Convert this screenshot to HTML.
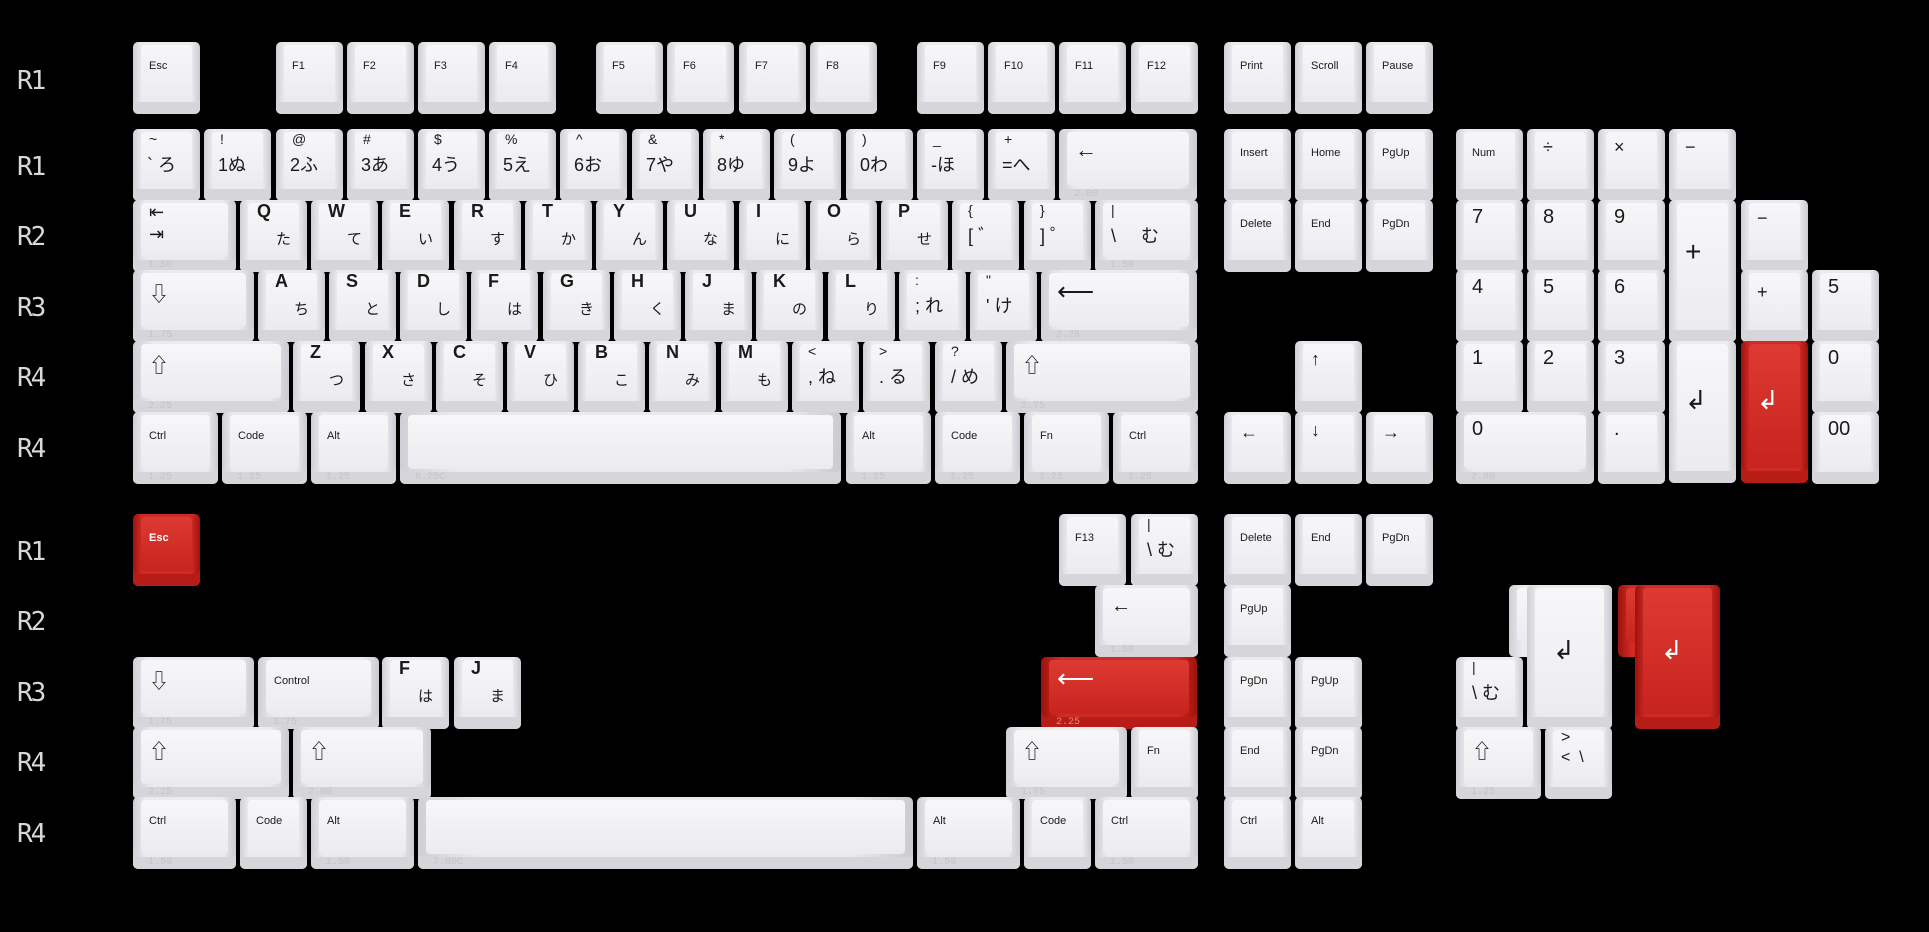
<!DOCTYPE html>
<html><head><meta charset="utf-8"><style>
*{margin:0;padding:0;box-sizing:border-box}
body{width:1929px;height:932px;background:#000;position:relative;overflow:hidden;font-family:"Liberation Sans","Noto Sans CJK JP",sans-serif;color:#1a1a1a}
.L{position:absolute;left:17px;font:26px "DejaVu Sans Mono","Liberation Mono",monospace;color:#d8d8d8;letter-spacing:-2px}
.k{position:absolute;height:72px;width:67px;border-radius:5px;background:linear-gradient(90deg,#cfcfd5 0,#ebebef 13%,#ebebef 87%,#cacad0 100%);box-shadow:inset 0 -12px 0 #d5d5da}
.k::before{content:"";position:absolute;left:8px;right:8px;top:3px;bottom:15px;border-radius:4px;background:linear-gradient(#f7f7f9,#ececf0)}
.k.t{height:142px}
.k.r{background:linear-gradient(90deg,#9e120d 0,#cf2a24 13%,#cf2a24 87%,#9e120d 100%);box-shadow:inset 0 -12px 0 #b81c17;color:#fff}
.k.r::before{background:linear-gradient(#dd3a33,#c8241f)}
.k span{position:absolute;z-index:1;white-space:nowrap}
.m{left:16px;top:18px;font-size:11px}
.a{left:17px;top:1px;font-weight:bold;font-size:18px}
.j{left:36px;top:28px;font-size:15px}
.u{left:16px;top:2px;font-size:14px}
.b{left:14px;top:22px;font-size:18px}
.i{left:16px;top:8px;font-size:22px}
.n{left:16px;top:6px;font-size:20px}
.s{left:15px;bottom:1px;font:10px "Liberation Mono",monospace;color:#c4c4ca}
</style></head><body>
<div class="L" style="top:66px">R1</div>
<div class="L" style="top:152px">R1</div>
<div class="L" style="top:222px">R2</div>
<div class="L" style="top:293px">R3</div>
<div class="L" style="top:363px">R4</div>
<div class="L" style="top:434px">R4</div>
<div class="L" style="top:537px">R1</div>
<div class="L" style="top:607px">R2</div>
<div class="L" style="top:678px">R3</div>
<div class="L" style="top:748px">R4</div>
<div class="L" style="top:819px">R4</div>

<div class="k" style="left:133px;top:42px"><span class="m">Esc</span></div>
<div class="k" style="left:276px;top:42px"><span class="m">F1</span></div>
<div class="k" style="left:347px;top:42px"><span class="m">F2</span></div>
<div class="k" style="left:418px;top:42px"><span class="m">F3</span></div>
<div class="k" style="left:489px;top:42px"><span class="m">F4</span></div>
<div class="k" style="left:596px;top:42px"><span class="m">F5</span></div>
<div class="k" style="left:667px;top:42px"><span class="m">F6</span></div>
<div class="k" style="left:739px;top:42px"><span class="m">F7</span></div>
<div class="k" style="left:810px;top:42px"><span class="m">F8</span></div>
<div class="k" style="left:917px;top:42px"><span class="m">F9</span></div>
<div class="k" style="left:988px;top:42px"><span class="m">F10</span></div>
<div class="k" style="left:1059px;top:42px"><span class="m">F11</span></div>
<div class="k" style="left:1131px;top:42px"><span class="m">F12</span></div>
<div class="k" style="left:1224px;top:42px"><span class="m">Print</span></div>
<div class="k" style="left:1295px;top:42px"><span class="m">Scroll</span></div>
<div class="k" style="left:1366px;top:42px"><span class="m">Pause</span></div>

<div class="k" style="left:133px;top:129px"><span class="u">~</span><span class="b">` ろ</span></div>
<div class="k" style="left:204px;top:129px"><span class="u">!</span><span class="b">1ぬ</span></div>
<div class="k" style="left:276px;top:129px"><span class="u">@</span><span class="b">2ふ</span></div>
<div class="k" style="left:347px;top:129px"><span class="u">#</span><span class="b">3あ</span></div>
<div class="k" style="left:418px;top:129px"><span class="u">$</span><span class="b">4う</span></div>
<div class="k" style="left:489px;top:129px"><span class="u">%</span><span class="b">5え</span></div>
<div class="k" style="left:560px;top:129px"><span class="u">^</span><span class="b">6お</span></div>
<div class="k" style="left:632px;top:129px"><span class="u">&amp;</span><span class="b">7や</span></div>
<div class="k" style="left:703px;top:129px"><span class="u">*</span><span class="b">8ゆ</span></div>
<div class="k" style="left:774px;top:129px"><span class="u">(</span><span class="b">9よ</span></div>
<div class="k" style="left:846px;top:129px"><span class="u">)</span><span class="b">0わ</span></div>
<div class="k" style="left:917px;top:129px"><span class="u">_</span><span class="b">-ほ</span></div>
<div class="k" style="left:988px;top:129px"><span class="u">+</span><span class="b">=へ</span></div>
<div class="k" style="left:1059px;top:129px;width:138px"><span class="i">←</span><span class="s">2.00</span></div>
<div class="k" style="left:1224px;top:129px"><span class="m">Insert</span></div>
<div class="k" style="left:1295px;top:129px"><span class="m">Home</span></div>
<div class="k" style="left:1366px;top:129px"><span class="m">PgUp</span></div>
<div class="k" style="left:1456px;top:129px"><span class="m">Num</span></div>
<div class="k" style="left:1527px;top:129px"><span class="i" style="font-size:18px">÷</span></div>
<div class="k" style="left:1598px;top:129px"><span class="i" style="font-size:18px">×</span></div>
<div class="k" style="left:1669px;top:129px"><span class="i" style="font-size:18px">−</span></div>

<div class="k" style="left:133px;top:200px;width:103px"><span class="u" style="font-size:18px;top:2px">⇤</span><span class="u" style="font-size:18px;top:24px">⇥</span><span class="s">1.50</span></div>
<div class="k" style="left:240px;top:200px"><span class="a">Q</span><span class="j">た</span></div>
<div class="k" style="left:311px;top:200px"><span class="a">W</span><span class="j">て</span></div>
<div class="k" style="left:382px;top:200px"><span class="a">E</span><span class="j">い</span></div>
<div class="k" style="left:454px;top:200px"><span class="a">R</span><span class="j">す</span></div>
<div class="k" style="left:525px;top:200px"><span class="a">T</span><span class="j">か</span></div>
<div class="k" style="left:596px;top:200px"><span class="a">Y</span><span class="j">ん</span></div>
<div class="k" style="left:667px;top:200px"><span class="a">U</span><span class="j">な</span></div>
<div class="k" style="left:739px;top:200px"><span class="a">I</span><span class="j">に</span></div>
<div class="k" style="left:810px;top:200px"><span class="a">O</span><span class="j">ら</span></div>
<div class="k" style="left:881px;top:200px"><span class="a">P</span><span class="j">せ</span></div>
<div class="k" style="left:952px;top:200px"><span class="u">{</span><span class="b" style="left:16px">[ ゛</span></div>
<div class="k" style="left:1024px;top:200px"><span class="u">}</span><span class="b" style="left:16px">] ゜</span></div>
<div class="k" style="left:1095px;top:200px;width:103px"><span class="u">|</span><span class="b" style="left:16px">\&nbsp;&nbsp;&nbsp;&nbsp; む</span><span class="s">1.50</span></div>
<div class="k" style="left:1224px;top:200px"><span class="m">Delete</span></div>
<div class="k" style="left:1295px;top:200px"><span class="m">End</span></div>
<div class="k" style="left:1366px;top:200px"><span class="m">PgDn</span></div>
<div class="k" style="left:1456px;top:200px"><span class="n">7</span></div>
<div class="k" style="left:1527px;top:200px"><span class="n">8</span></div>
<div class="k" style="left:1598px;top:200px"><span class="n">9</span></div>
<div class="k t" style="left:1669px;top:200px"><span class="i" style="font-size:28px;top:36px">+</span></div>
<div class="k" style="left:1741px;top:200px"><span class="i" style="font-size:18px">−</span></div>

<div class="k" style="left:133px;top:270px;width:121px"><span class="i" style="font-size:20px">⇩</span><span class="s">1.75</span></div>
<div class="k" style="left:258px;top:270px"><span class="a">A</span><span class="j">ち</span></div>
<div class="k" style="left:329px;top:270px"><span class="a">S</span><span class="j">と</span></div>
<div class="k" style="left:400px;top:270px"><span class="a">D</span><span class="j">し</span></div>
<div class="k" style="left:471px;top:270px"><span class="a">F</span><span class="j">は</span></div>
<div class="k" style="left:543px;top:270px"><span class="a">G</span><span class="j">き</span></div>
<div class="k" style="left:614px;top:270px"><span class="a">H</span><span class="j">く</span></div>
<div class="k" style="left:685px;top:270px"><span class="a">J</span><span class="j">ま</span></div>
<div class="k" style="left:756px;top:270px"><span class="a">K</span><span class="j">の</span></div>
<div class="k" style="left:828px;top:270px"><span class="a">L</span><span class="j">り</span></div>
<div class="k" style="left:899px;top:270px"><span class="u">:</span><span class="b" style="left:16px">; れ</span></div>
<div class="k" style="left:970px;top:270px"><span class="u">"</span><span class="b" style="left:16px">' け</span></div>
<div class="k" style="left:1041px;top:270px;width:156px"><span class="i" style="font-size:26px;top:6px">⟵</span><span class="s">2.25</span></div>
<div class="k" style="left:1456px;top:270px"><span class="n">4</span></div>
<div class="k" style="left:1527px;top:270px"><span class="n">5</span></div>
<div class="k" style="left:1598px;top:270px"><span class="n">6</span></div>
<div class="k" style="left:1741px;top:270px"><span class="i" style="font-size:18px;top:12px">+</span></div>
<div class="k" style="left:1812px;top:270px"><span class="n">5</span></div>

<div class="k" style="left:133px;top:341px;width:156px"><span class="i" style="font-size:20px">⇧</span><span class="s">2.25</span></div>
<div class="k" style="left:293px;top:341px"><span class="a">Z</span><span class="j">つ</span></div>
<div class="k" style="left:365px;top:341px"><span class="a">X</span><span class="j">さ</span></div>
<div class="k" style="left:436px;top:341px"><span class="a">C</span><span class="j">そ</span></div>
<div class="k" style="left:507px;top:341px"><span class="a">V</span><span class="j">ひ</span></div>
<div class="k" style="left:578px;top:341px"><span class="a">B</span><span class="j">こ</span></div>
<div class="k" style="left:649px;top:341px"><span class="a">N</span><span class="j">み</span></div>
<div class="k" style="left:721px;top:341px"><span class="a">M</span><span class="j">も</span></div>
<div class="k" style="left:792px;top:341px"><span class="u">&lt;</span><span class="b" style="left:16px">, ね</span></div>
<div class="k" style="left:863px;top:341px"><span class="u">&gt;</span><span class="b" style="left:16px">. る</span></div>
<div class="k" style="left:935px;top:341px"><span class="u">?</span><span class="b" style="left:16px">/ め</span></div>
<div class="k" style="left:1006px;top:341px;width:192px"><span class="i" style="font-size:20px">⇧</span><span class="s">2.75</span></div>
<div class="k" style="left:1295px;top:341px"><span class="i" style="font-size:18px">↑</span></div>
<div class="k" style="left:1456px;top:341px"><span class="n">1</span></div>
<div class="k" style="left:1527px;top:341px"><span class="n">2</span></div>
<div class="k" style="left:1598px;top:341px"><span class="n">3</span></div>
<div class="k t" style="left:1669px;top:341px"><span class="i" style="font-size:26px;top:44px">↲</span></div>
<div class="k t r" style="left:1741px;top:341px"><span class="i" style="font-size:26px;top:44px">↲</span></div>
<div class="k" style="left:1812px;top:341px"><span class="n">0</span></div>

<div class="k" style="left:133px;top:412px;width:85px"><span class="m">Ctrl</span><span class="s">1.25</span></div>
<div class="k" style="left:222px;top:412px;width:85px"><span class="m">Code</span><span class="s">1.25</span></div>
<div class="k" style="left:311px;top:412px;width:85px"><span class="m">Alt</span><span class="s">1.25</span></div>
<div class="k" style="left:400px;top:412px;width:441px"><span class="s">6.25C</span></div>
<div class="k" style="left:846px;top:412px;width:85px"><span class="m">Alt</span><span class="s">1.25</span></div>
<div class="k" style="left:935px;top:412px;width:85px"><span class="m">Code</span><span class="s">1.25</span></div>
<div class="k" style="left:1024px;top:412px;width:85px"><span class="m">Fn</span><span class="s">1.25</span></div>
<div class="k" style="left:1113px;top:412px;width:85px"><span class="m">Ctrl</span><span class="s">1.25</span></div>
<div class="k" style="left:1224px;top:412px"><span class="i" style="font-size:18px;top:10px">←</span></div>
<div class="k" style="left:1295px;top:412px"><span class="i" style="font-size:18px">↓</span></div>
<div class="k" style="left:1366px;top:412px"><span class="i" style="font-size:18px;top:10px">→</span></div>
<div class="k" style="left:1456px;top:412px;width:138px"><span class="n">0</span><span class="s">2.00</span></div>
<div class="k" style="left:1598px;top:412px"><span class="n">.</span></div>
<div class="k" style="left:1812px;top:412px"><span class="n">00</span></div>

<div class="k r" style="left:133px;top:514px"><span class="m" style="font-weight:bold">Esc</span></div>
<div class="k" style="left:1059px;top:514px"><span class="m">F13</span></div>
<div class="k" style="left:1131px;top:514px"><span class="u">|</span><span class="b" style="left:16px">\ む</span></div>
<div class="k" style="left:1224px;top:514px"><span class="m">Delete</span></div>
<div class="k" style="left:1295px;top:514px"><span class="m">End</span></div>
<div class="k" style="left:1366px;top:514px"><span class="m">PgDn</span></div>

<div class="k" style="left:1095px;top:585px;width:103px"><span class="i" style="font-size:20px;top:10px">←</span><span class="s">1.50</span></div>
<div class="k" style="left:1224px;top:585px"><span class="m">PgUp</span></div>
<div class="k" style="left:1509px;top:585px;width:103px;height:72px;box-shadow:none"></div>
<div class="k" style="left:1527px;top:585px;width:85px;height:144px"><span class="i" style="font-size:26px;top:50px;left:26px">↲</span></div>
<div class="k r" style="left:1618px;top:585px;width:102px;height:72px;box-shadow:none"></div>
<div class="k r" style="left:1635px;top:585px;width:85px;height:144px"><span class="i" style="font-size:26px;top:50px;left:26px">↲</span></div>

<div class="k" style="left:133px;top:657px;width:121px"><span class="i" style="font-size:20px">⇩</span><span class="s">1.75</span></div>
<div class="k" style="left:258px;top:657px;width:121px"><span class="m">Control</span><span class="s">1.75</span></div>
<div class="k" style="left:382px;top:657px"><span class="a">F</span><span class="j">は</span></div>
<div class="k" style="left:454px;top:657px"><span class="a">J</span><span class="j">ま</span></div>
<div class="k r" style="left:1041px;top:657px;width:156px"><span class="i" style="font-size:26px;top:6px">⟵</span><span class="s" style="color:#e8837f">2.25</span></div>
<div class="k" style="left:1224px;top:657px"><span class="m">PgDn</span></div>
<div class="k" style="left:1295px;top:657px"><span class="m">PgUp</span></div>
<div class="k" style="left:1456px;top:657px"><span class="u">|</span><span class="b" style="left:16px">\ む</span></div>

<div class="k" style="left:133px;top:727px;width:156px"><span class="i" style="font-size:20px">⇧</span><span class="s">2.25</span></div>
<div class="k" style="left:293px;top:727px;width:138px"><span class="i" style="font-size:20px">⇧</span><span class="s">2.00</span></div>
<div class="k" style="left:1006px;top:727px;width:121px"><span class="i" style="font-size:20px">⇧</span><span class="s">1.75</span></div>
<div class="k" style="left:1131px;top:727px"><span class="m">Fn</span></div>
<div class="k" style="left:1224px;top:727px"><span class="m">End</span></div>
<div class="k" style="left:1295px;top:727px"><span class="m">PgDn</span></div>
<div class="k" style="left:1456px;top:727px;width:85px"><span class="i" style="font-size:20px">⇧</span><span class="s">1.25</span></div>
<div class="k" style="left:1545px;top:727px"><span class="u" style="font-size:16px">&gt;</span><span class="b" style="left:16px;font-size:16px">&lt;&nbsp;&nbsp;\</span></div>

<div class="k" style="left:133px;top:797px;width:103px"><span class="m">Ctrl</span><span class="s">1.50</span></div>
<div class="k" style="left:240px;top:797px"><span class="m">Code</span></div>
<div class="k" style="left:311px;top:797px;width:103px"><span class="m">Alt</span><span class="s">1.50</span></div>
<div class="k" style="left:418px;top:797px;width:495px"><span class="s">7.00C</span></div>
<div class="k" style="left:917px;top:797px;width:103px"><span class="m">Alt</span><span class="s">1.50</span></div>
<div class="k" style="left:1024px;top:797px"><span class="m">Code</span></div>
<div class="k" style="left:1095px;top:797px;width:103px"><span class="m">Ctrl</span><span class="s">1.50</span></div>
<div class="k" style="left:1224px;top:797px"><span class="m">Ctrl</span></div>
<div class="k" style="left:1295px;top:797px"><span class="m">Alt</span></div>
</body></html>
